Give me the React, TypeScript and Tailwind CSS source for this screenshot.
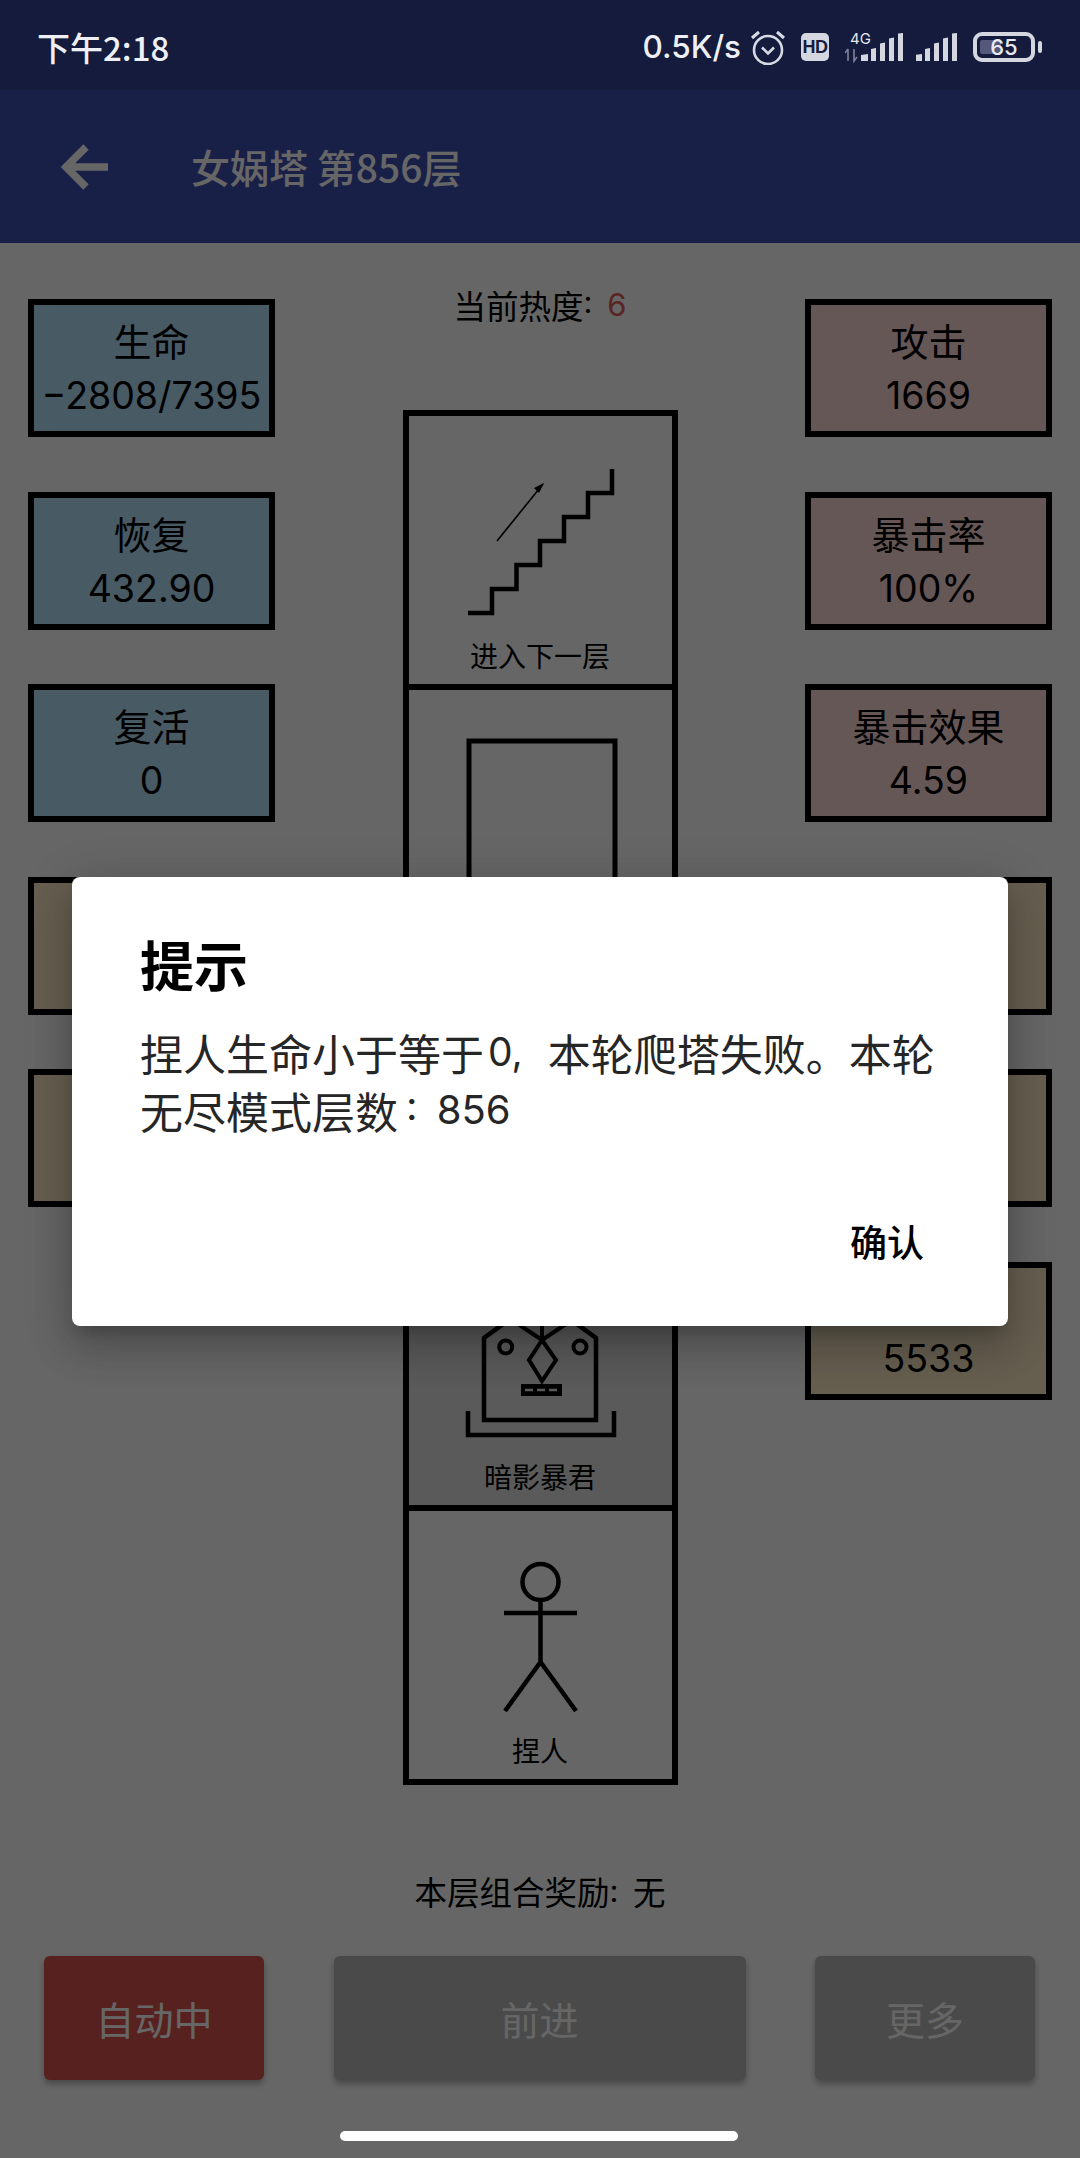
const cjk = "[font-family:'Noto_Sans_CJK_SC','Noto_Sans',sans-serif]";
const latin = "[font-family:'Inter',sans-serif]";

type Stat = { label?: string; value?: string; color: string };

const blue = 'bg-[#b4e1fa]';
const rose = 'bg-[#ffd9d9]';
const sand = 'bg-[#ffeec8]';

const leftStats: Stat[] = [
  { label: '生命', value: '−2808/7395', color: blue },
  { label: '恢复', value: '432.90', color: blue },
  { label: '复活', value: '0', color: blue },
  { color: sand },
  { color: sand },
];

const rightStats: Stat[] = [
  { label: '攻击', value: '1669', color: rose },
  { label: '暴击率', value: '100%', color: rose },
  { label: '暴击效果', value: '4.59', color: rose },
  { color: sand },
  { color: sand },
  { value: '5533', color: sand },
];

function StatCard({ label, value, color }: Stat) {
  return (
    <div className={`h-[138px] pt-[10px] border-[6px] border-black flex flex-col items-center text-black whitespace-nowrap ${color}`}>
      <span className="h-[50px] text-[38px] leading-[50px]">{label}</span>
      <span className={`mt-[4px] h-[54px] text-[37.500px] leading-[54px] ${latin}`}>{value}</span>
    </div>
  );
}

function TowerCell({ label, shaded, last, children }: { label?: string; shaded?: boolean; last?: boolean; children?: React.ReactNode }) {
  return (
    <div className={`flex-1 flex flex-col items-center justify-end pb-[11px] border-black ${last ? '' : 'border-b-[6px]'} ${shaded ? 'bg-[#e0e0e0]' : ''}`}>
      <svg width="160" height="176" viewBox="0 0 160 176" fill="none" stroke="black">
        {children}
      </svg>
      <span className="h-[36px] text-[28px] leading-[36px] text-black">{label}</span>
    </div>
  );
}

const signalBars = 'M0 28v-6l7-1v7zM10 28v-12l5-1v13zM19 28V10.500l5-1V28zM28 28V5.500l5-1V28zM37 28V.5l5-.5v28z';

function StatusBar() {
  return (
    <div className={`relative z-20 h-[90px] pt-[4px] bg-[#151b3c] flex items-center text-[#eef0f6] ${cjk}`}>
      <span className="ml-[37px] text-[33px] leading-none font-medium">下午2:18</span>
      <span className={`ml-auto text-[31.500px] leading-none font-medium ${latin}`}>0.5K/s</span>
      {/* alarm */}
      <svg className="ml-[9px]" width="36" height="36" viewBox="0 0 36 36" fill="none" stroke="#d9dbe4" strokeWidth="2.600">
        <circle cx="18" cy="21" r="14" />
        <path d="M12 18.500l6 6 6-6" />
        <path d="M2 9l7-6M34 9l-7-6" strokeWidth="3" />
      </svg>
      {/* HD badge */}
      <span className="ml-[15px] w-[28px] h-[28px] rounded-[5px] bg-[#d5d7e0] flex items-center justify-center text-[18px] tracking-tight font-bold text-[#151b3c] [font-family:'Liberation_Sans',sans-serif]">HD</span>
      {/* SIM 1 with network type */}
      <div className="relative ml-[16px] w-[58px] h-[34px]">
        <span className={`absolute left-[5px] top-[1px] text-[15px] leading-none text-[#e4e6ee] ${latin}`}>4G</span>
        <svg width="58" height="34" viewBox="0 -2 58 34" fill="#d5d7e0">
          <path d="M3 29V17M0 21l3-4M9 17v12l3-4" stroke="#7d8198" strokeWidth="1.600" fill="none" />
          <path d={signalBars} transform="translate(16 1)" />
        </svg>
      </div>
      {/* SIM 2 */}
      <svg className="ml-[13px]" width="41" height="30" viewBox="0 0 41 30" fill="#d5d7e0">
        <path d={signalBars} transform="translate(-1 1)" />
      </svg>
      {/* battery */}
      <div className="relative ml-[16px] mr-[45px] w-[62px] h-[30px] rounded-[9px] border-[4px] border-[#d5d7e0]">
        <div className="absolute left-[3px] top-[4px] bottom-[4px] w-[21px] rounded-[2px] bg-[#54587a]" />
        <span className={`absolute inset-0 flex items-center justify-center text-[22px] leading-none font-medium text-[#e8eaf0] ${latin}`}>65</span>
        <div className="absolute -right-[11px] top-[5px] w-[4px] h-[12px] rounded-full bg-[#d5d7e0]" />
      </div>
    </div>
  );
}

export default function App() {
  return (
    <div className={`relative w-[1080px] h-[2158px] overflow-hidden bg-white ${cjk}`}>
      <StatusBar />

      {/* app bar */}
      <div className="h-[153px] bg-[#3f51b5] flex items-center text-white">
        <svg className="ml-[60px]" width="50" height="46" viewBox="0 0 50 46" fill="none" stroke="white" strokeWidth="7.500">
          <path d="M26 3L6 23l20 20M6 23h42" />
        </svg>
        <span className="ml-[81px] text-[39px] leading-none font-medium whitespace-nowrap">女娲塔 第856层</span>
      </div>

      <div className="flex justify-between px-[28px]">
        <div className="w-[247px] pt-[56px] flex flex-col gap-[54.500px]">
          {leftStats.map((s, i) => (
            <StatCard key={i} {...s} />
          ))}
        </div>

        <div className="w-[275px] pt-[39px] flex flex-col items-center text-[32.500px] leading-[46px] text-black whitespace-nowrap">
          <div className="h-[46px] flex items-center">
            当前热度<span className={`text-[31px] whitespace-pre [word-spacing:6px] ${latin}`}>: <span className="text-[#e05a52]">6</span></span>
          </div>

          {/* tower floors, top to bottom */}
          <div className="mt-[82px] w-full h-[1375px] border-[6px] border-black flex flex-col">
            <TowerCell label="进入下一层">
              <path d="M8 152h24v-24h24.500v-24H80V80h24V56h24V32h24V8" strokeWidth="4.500" />
              <path d="M37 80l46-57" strokeWidth="1.600" />
              <path d="M84 22l-10 5 5 5z" fill="black" stroke="none" />
            </TowerCell>
            <TowerCell>
              <path d="M9 176V6h146v170" strokeWidth="5" />
            </TowerCell>
            <TowerCell />
            <TowerCell label="暗影暴君" shaded>
              <path d="M24 138V56l22-16h68l22 16v82z" strokeWidth="4.500" />
              <circle cx="45.700" cy="65" r="6.500" strokeWidth="4" />
              <circle cx="120" cy="65" r="6.500" strokeWidth="4" />
              <path d="M82 58l14 20-14 21-13-21z" strokeWidth="4" />
              <path d="M82 58L55 40M82 58l27-18M82 58V30" strokeWidth="4" />
              <rect x="61" y="102" width="41" height="12" fill="black" stroke="none" />
              <path d="M65 108h8M77 108h8M89 108h8" stroke="#e0e0e0" strokeWidth="2.500" />
              <path d="M8 129v24h146v-24" strokeWidth="4.500" />
            </TowerCell>
            <TowerCell label="捏人" last>
              <circle cx="80.500" cy="26" r="18" strokeWidth="4.500" />
              <path d="M44 57h73M80.500 44v62M80.500 106L45 155M80.500 106L116 155" strokeWidth="4.500" />
            </TowerCell>
          </div>

          <div className="mt-[83px] h-[46px] flex items-center">
            本层组合奖励<span className={`text-[31px] whitespace-pre [word-spacing:6px] ${latin}`}>: </span>无
          </div>
        </div>

        <div className="w-[247px] pt-[56px] flex flex-col gap-[54.500px]">
          {rightStats.map((s, i) => (
            <StatCard key={i} {...s} />
          ))}
        </div>
      </div>

      {/* bottom actions */}
      <div className="absolute left-[44px] right-[45px] top-[1956px] flex justify-between text-[39px] text-white">
        <button className="w-[220px] h-[124px] rounded-[6px] bg-[#d9534f] shadow-[0_4px_6px_rgba(0,0,0,0.3)]">自动中</button>
        <button className="w-[412px] h-[124px] rounded-[6px] bg-[#b9b9b9] shadow-[0_4px_6px_rgba(0,0,0,0.3)]">前进</button>
        <button className="w-[220px] h-[124px] rounded-[6px] bg-[#b9b9b9] shadow-[0_4px_6px_rgba(0,0,0,0.3)]">更多</button>
      </div>

      {/* scrim */}
      <div className="absolute inset-0 z-10 bg-black/60" />

      <div className="absolute z-20 left-[72px] top-[877px] w-[936px] h-[449px] rounded-[8px] bg-white shadow-[0_24px_38px_3px_rgba(0,0,0,0.14),0_9px_46px_8px_rgba(0,0,0,0.12),0_11px_15px_-7px_rgba(0,0,0,0.2)] flex flex-col pl-[68px] pt-[58px] pb-[60px] pr-[84px]">
        <h2 className="text-[54px] leading-[58px] font-bold text-black">提示</h2>
        <div className="mt-[30px] text-[43px] text-[#262626] whitespace-nowrap">
          <p className="h-[58px] flex items-center">
            捏人生命小于等于<span className={`ml-[4px] text-[39px] whitespace-pre [word-spacing:14px] ${latin}`}>0, </span>本轮爬塔失败。本轮
          </p>
          <p className="h-[58px] flex items-center">
            无尽模式层数<span className={`ml-[8px] text-[40px] whitespace-pre [word-spacing:8px] ${latin}`}>: 856</span>
          </p>
        </div>
        <div className="mt-auto flex justify-end">
          <button className="text-[37px] leading-[50px] font-medium text-black">确认</button>
        </div>
      </div>

      {/* gesture bar */}
      <div className="absolute z-20 left-[340px] top-[2131px] w-[398px] h-[10px] rounded-full bg-white" />
    </div>
  );
}
